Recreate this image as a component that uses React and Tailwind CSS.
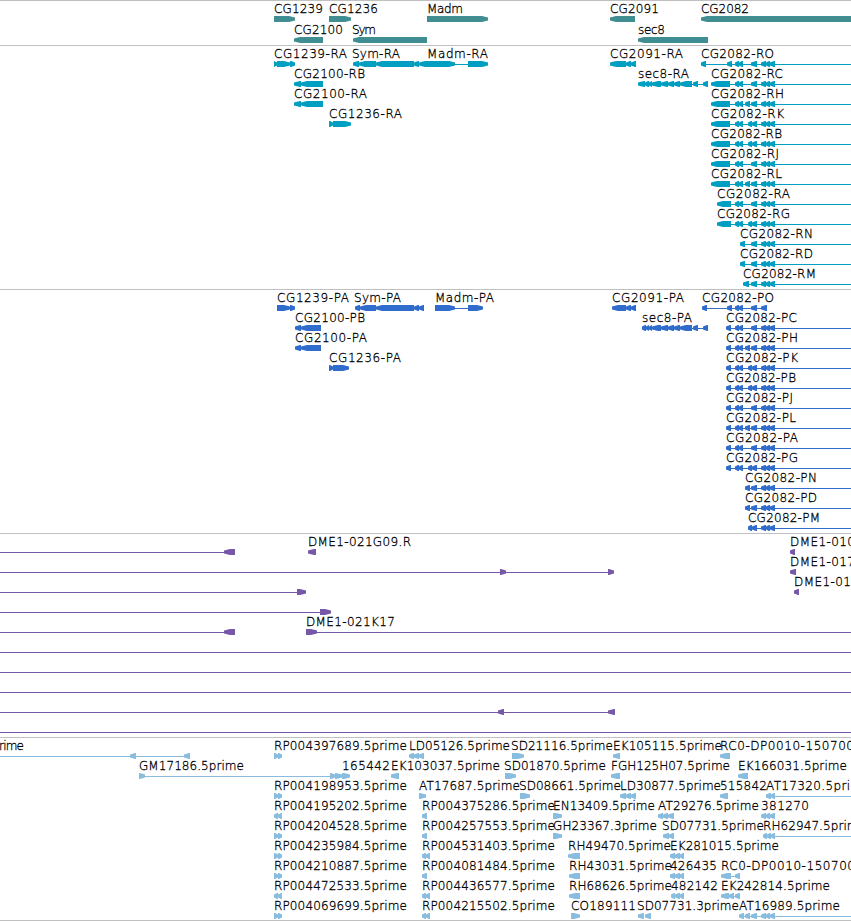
import React from 'react';

const WIDTH = 851;

// exons shared by every CG2082 isoform
const TAIL = [[761, 766], [766, 770], [770, 775]];
const C = [[735, 739], [739, 743], [751, 757], ...TAIL];
const H = [[735, 739], [739, 743], [745, 750], [751, 757], ...TAIL];
const K = [[735, 739], [739, 743], [748, 752], [752, 757], ...TAIL];
const SEC8 = [[652, 661], [661, 668], [668, 674], [674, 680], [680, 692], [693, 698], [703, 708]];

// [row, label, x, label width, direction, segments, line]
const genes = [
  [0, 'CG1239', 274, 49, 1, [[274, 295]]],
  [0, 'CG1236', 329, 49, 1, [[329, 351]]],
  [0, 'Madm', 427, 36, 1, [[427, 488]]],
  [0, 'CG2091', 610, 49, -1, [[610, 635]]],
  [0, 'CG2082', 701, 48, -1, [[701, 860]]],
  [1, 'CG2100', 294, 49, -1, [[294, 323]]],
  [1, 'Sym', 352, 24, -1, [[353, 427]]],
  [1, 'sec8', 638, 27, -1, [[638, 708]]],
];

const transcripts = [
  [0, 'CG1239-RA', 274, 73, 1, [[274, 277], [277, 290], [290, 295]], [274, 295]],
  [0, 'Sym-RA', 352, 48, -1, [[353, 359], [359, 376], [376, 414], [414, 419], [419, 427]], [353, 427]],
  [0, 'Madm-RA', 427, 61, 1, [[427, 455], [468, 488]], [427, 488]],
  [0, 'CG2091-RA', 610, 73, -1, [[610, 626], [626, 631], [631, 636]], [610, 636]],
  [0, 'CG2082-RO', 701, 73, -1, [[701, 706], [727, 732], ...C], [701, WIDTH]],
  [1, 'CG2100-RB', 294, 71, -1, [[294, 301], [301, 323]], [294, 323]],
  [1, 'sec8-RA', 638, 51, -1, [[638, 645], [645, 649], [649, 652], ...SEC8], [638, 708]],
  [1, 'CG2082-RC', 711, 72, -1, [[711, 730], ...C], [711, WIDTH]],
  [2, 'CG2100-RA', 294, 73, -1, [[294, 301], [301, 323]], [294, 323]],
  [2, 'CG2082-RH', 711, 73, -1, [[711, 730], ...H], [711, WIDTH]],
  [3, 'CG1236-RA', 329, 73, 1, [[329, 333], [333, 351]], [329, 351]],
  [3, 'CG2082-RK', 711, 73, -1, [[711, 730], ...K], [711, WIDTH]],
  [4, 'CG2082-RB', 711, 71, -1, [[711, 730], ...K], [711, WIDTH]],
  [5, 'CG2082-RJ', 711, 68, -1, [[711, 730], ...C], [711, WIDTH]],
  [6, 'CG2082-RL', 711, 71, -1, [[711, 730], ...H], [711, WIDTH]],
  [7, 'CG2082-RA', 717, 73, -1, [[717, 731], ...C], [717, WIDTH]],
  [8, 'CG2082-RG', 717, 73, -1, [[717, 731], ...K], [717, WIDTH]],
  [9, 'CG2082-RN', 740, 73, -1, [[740, 745], [751, 757], ...TAIL], [740, WIDTH]],
  [10, 'CG2082-RD', 740, 73, -1, [[740, 745], [751, 757], ...TAIL], [740, WIDTH]],
  [11, 'CG2082-RM', 743, 73, -1, [[743, 749], [751, 757], ...TAIL], [743, WIDTH]],
];

const proteins = [
  [0, 'CG1239-PA', 277, 72, 1, [[277, 290], [290, 295]], [277, 295]],
  [0, 'Sym-PA', 354, 47, -1, [[355, 360], [360, 376], [376, 414], [414, 419], [419, 424]], [355, 424]],
  [0, 'Madm-PA', 435, 59, 1, [[435, 455], [468, 483]], [435, 483]],
  [0, 'CG2091-PA', 612, 72, -1, [[612, 626], [626, 631], [631, 636]], [612, 636]],
  [0, 'CG2082-PO', 702, 72, -1, [[702, 707], [727, 732], [735, 739], [739, 743], [751, 757], [761, 767]], [702, 767]],
  [1, 'CG2100-PB', 295, 70, -1, [[295, 301], [301, 321]], [295, 321]],
  [1, 'sec8-PA', 642, 50, -1, [[642, 646], [646, 649], [649, 652], ...SEC8], [642, 708]],
  [1, 'CG2082-PC', 726, 71, -1, [[726, 731], ...C], [726, WIDTH]],
  [2, 'CG2100-PA', 295, 72, -1, [[295, 301], [301, 321]], [295, 321]],
  [2, 'CG2082-PH', 726, 72, -1, [[726, 731], ...H], [726, WIDTH]],
  [3, 'CG1236-PA', 329, 72, 1, [[329, 333], [333, 349]], [329, 349]],
  [3, 'CG2082-PK', 726, 72, -1, [[726, 731], ...K], [726, WIDTH]],
  [4, 'CG2082-PB', 726, 70, -1, [[726, 731], ...K], [726, WIDTH]],
  [5, 'CG2082-PJ', 726, 67, -1, [[726, 731], ...C], [726, WIDTH]],
  [6, 'CG2082-PL', 726, 70, -1, [[726, 731], ...H], [726, WIDTH]],
  [7, 'CG2082-PA', 726, 72, -1, [[726, 731], ...C], [726, WIDTH]],
  [8, 'CG2082-PG', 726, 72, -1, [[726, 731], ...K], [726, WIDTH]],
  [9, 'CG2082-PN', 745, 72, -1, [[745, 750], [751, 757], ...TAIL], [745, WIDTH]],
  [10, 'CG2082-PD', 745, 72, -1, [[745, 750], [751, 757], ...TAIL], [745, WIDTH]],
  [11, 'CG2082-PM', 748, 72, -1, [[748, 752], [752, 757], ...TAIL], [748, WIDTH]],
];

const bacs = [
  [0, '', 0, 0, -1, [[224, 235]], [0, 235]],
  [0, 'DME1-021G09.R', 308, 103, -1, [[308, 316]]],
  [0, 'DME1-010', 790, 65, -1, [[790, 795]]],
  [1, '', 0, 0, 1, [[500, 506], [608, 614]], [0, 613]],
  [1, 'DME1-017', 790, 65, -1, [[790, 796]]],
  [2, '', 0, 0, 1, [[297, 306]], [0, 306]],
  [2, 'DME1-01', 794, 57, -1, [[794, 799]]],
  [3, '', 0, 0, 1, [[320, 331]], [0, 331]],
  [4, '', 0, 0, -1, [[224, 235]], [0, 235]],
  [4, 'DME1-021K17', 306, 89, 1, [[306, 317]], [306, WIDTH]],
  [5, '', 0, 0, 1, [], [0, WIDTH]],
  [6, '', 0, 0, 1, [], [0, WIDTH]],
  [7, '', 0, 0, 1, [], [0, WIDTH]],
  [8, '', 0, 0, -1, [[498, 504], [608, 615]], [0, 615]],
  [9, '', 0, 0, 1, [], [0, WIDTH]],
];

const PAIR = [[274, 278], [278, 282]];

const ests = [
  [0, 'rime', -1, 25, -1, [[130, 136], [184, 190]], [0, 190]],
  [0, 'RP004397689.5prime', 274, 133, 1, PAIR],
  [0, 'LD05126.5prime', 409, 101, -1, [[409, 414], [414, 419], [419, 424]]],
  [0, 'SD21116.5prime', 511, 102, 1, [[512, 524]]],
  [0, 'EK105115.5prime', 613, 109, -1, [[613, 620]]],
  [0, 'RC0-DP0010-150700', 720, 134, -1, [[720, 730]]],
  [1, 'GM17186.5prime', 139, 105, 1, [[139, 145], [330, 335], [335, 342], [342, 350]], [139, 350]],
  [1, '165442', 342, 48, 1, []],
  [1, 'EK103037.5prime', 391, 109, -1, [[391, 399]]],
  [1, 'SD01870.5prime', 504, 102, 1, [[505, 516]]],
  [1, 'FGH125H07.5prime', 611, 119, -1, [[611, 620]]],
  [1, 'EK166031.5prime', 738, 109, -1, [[738, 748]]],
  [2, 'RP004198953.5prime', 274, 133, 1, PAIR],
  [2, 'AT17687.5prime', 419, 101, 1, [[419, 426]]],
  [2, 'SD08661.5prime', 519, 102, 1, [[520, 530]]],
  [2, 'LD30877.5prime', 620, 101, -1, [[620, 626], [626, 631], [631, 636]]],
  [2, '515842', 720, 47, -1, [[720, 728]]],
  [2, 'AT17320.5prime', 766, 104, -1, [[766, 771], [771, 775]], [766, WIDTH]],
  [3, 'RP004195202.5prime', 274, 133, -1, PAIR],
  [3, 'RP004375286.5prime', 422, 133, -1, [[422, 427]]],
  [3, 'EN13409.5prime', 553, 102, 1, [[553, 562]]],
  [3, 'AT29276.5prime', 658, 101, -1, [[658, 663], [663, 668], [668, 674]]],
  [3, '381270', 761, 48, -1, TAIL],
  [4, 'RP004204528.5prime', 274, 133, 1, PAIR],
  [4, 'RP004257553.5prime', 422, 133, -1, [[422, 427]]],
  [4, 'GH23367.3prime', 553, 104, 1, [[553, 562]]],
  [4, 'SD07731.5prime', 662, 102, -1, [[663, 669], [669, 674]]],
  [4, 'RH62947.5prime', 763, 103, -1, [[763, 767], [767, 771], [771, 775]], [763, WIDTH]],
  [5, 'RP004235984.5prime', 274, 133, 1, PAIR],
  [5, 'RP004531403.5prime', 422, 133, -1, [[422, 426], [426, 430]]],
  [5, 'RH49470.5prime', 568, 103, -1, [[568, 580]]],
  [5, 'EK281015.5prime', 670, 109, -1, [[670, 675], [675, 680], [680, 684]]],
  [6, 'RP004210887.5prime', 274, 133, 1, PAIR],
  [6, 'RP004081484.5prime', 422, 133, -1, [[422, 427]]],
  [6, 'RH43031.5prime', 569, 103, -1, [[569, 580]]],
  [6, '426435', 670, 47, -1, [[670, 675], [675, 680], [680, 684]]],
  [6, 'RC0-DP0010-150700', 721, 134, -1, [[721, 731], [735, 740]], [721, 740]],
  [7, 'RP004472533.5prime', 274, 133, -1, PAIR],
  [7, 'RP004436577.5prime', 422, 133, -1, [[422, 426], [426, 430]]],
  [7, 'RH68626.5prime', 569, 103, -1, [[569, 580]]],
  [7, '482142', 671, 47, -1, [[671, 675], [675, 680], [680, 684]]],
  [7, 'EK242814.5prime', 721, 109, -1, [[721, 729], [729, 734], [735, 740]], [721, 740]],
  [8, 'RP004069699.5prime', 274, 133, 1, PAIR],
  [8, 'RP004215502.5prime', 422, 133, -1, [[422, 426], [426, 430]]],
  [8, 'CO189111', 571, 65, 1, [[571, 580]]],
  [8, 'SD07731.3prime', 637, 102, -1, [[638, 644], [645, 651]]],
  [8, 'AT16989.5prime', 739, 101, -1, [[739, 744], [745, 750], [751, 757], ...TAIL], [739, WIDTH]],
];

// a box with a pointed end on the strand's side
const arrow = (x1, x2, y, dir) => {
  const head = Math.min(6, Math.max(3, x2 - x1 - 1));
  const base = dir < 0 ? x1 + head : x2 - head;
  const tip = dir < 0 ? x1 : x2;
  const back = dir < 0 ? x2 : x1;
  return `M${back} ${y}H${base}L${tip} ${y + 1.6}V${y + 4.4}L${base} ${y + 6}H${back}Z`;
};

const Track = ({ items, color, className, pitch = 20 }) => (
  <section className={`border-t border-[#c0c0c0] overflow-hidden ${className}`}>
    <svg className="block w-full h-full" fill={color}>
      {items.map(([row, label, x, width, dir, segments, line], i) => {
        const y = row * pitch;
        return (
          <g key={i}>
            {line && <rect x={line[0]} y={y + 18} width={line[1] - line[0]} height="1" />}
            {segments.map(([a, b]) => (
              <path key={a} d={arrow(a, b, y + 15, dir)} />
            ))}
            {label && (
              <text x={x} y={y + 12} textLength={width} fill="#000" stroke="#000" strokeWidth="0.3">
                {label}
              </text>
            )}
          </g>
        );
      })}
    </svg>
  </section>
);

const App = () => {
  return (
    <main className="w-[851px] h-[921px] flex flex-col overflow-hidden bg-white border-b border-[#c0c0c0] text-[12px] font-extralight font-['DejaVu_Sans_Light','DejaVu_Sans',sans-serif]">
      <Track items={genes} color="#408e91" className="h-[45px]" pitch={21} />
      <Track items={transcripts} color="#009ec1" className="h-[244px]" />
      <Track items={proteins} color="#306ccb" className="h-[244px]" />
      <Track items={bacs} color="#7757a8" className="h-[204px]" />
      <Track items={ests} color="#88bddf" className="h-[183px]" />
    </main>
  );
};

export default App;
